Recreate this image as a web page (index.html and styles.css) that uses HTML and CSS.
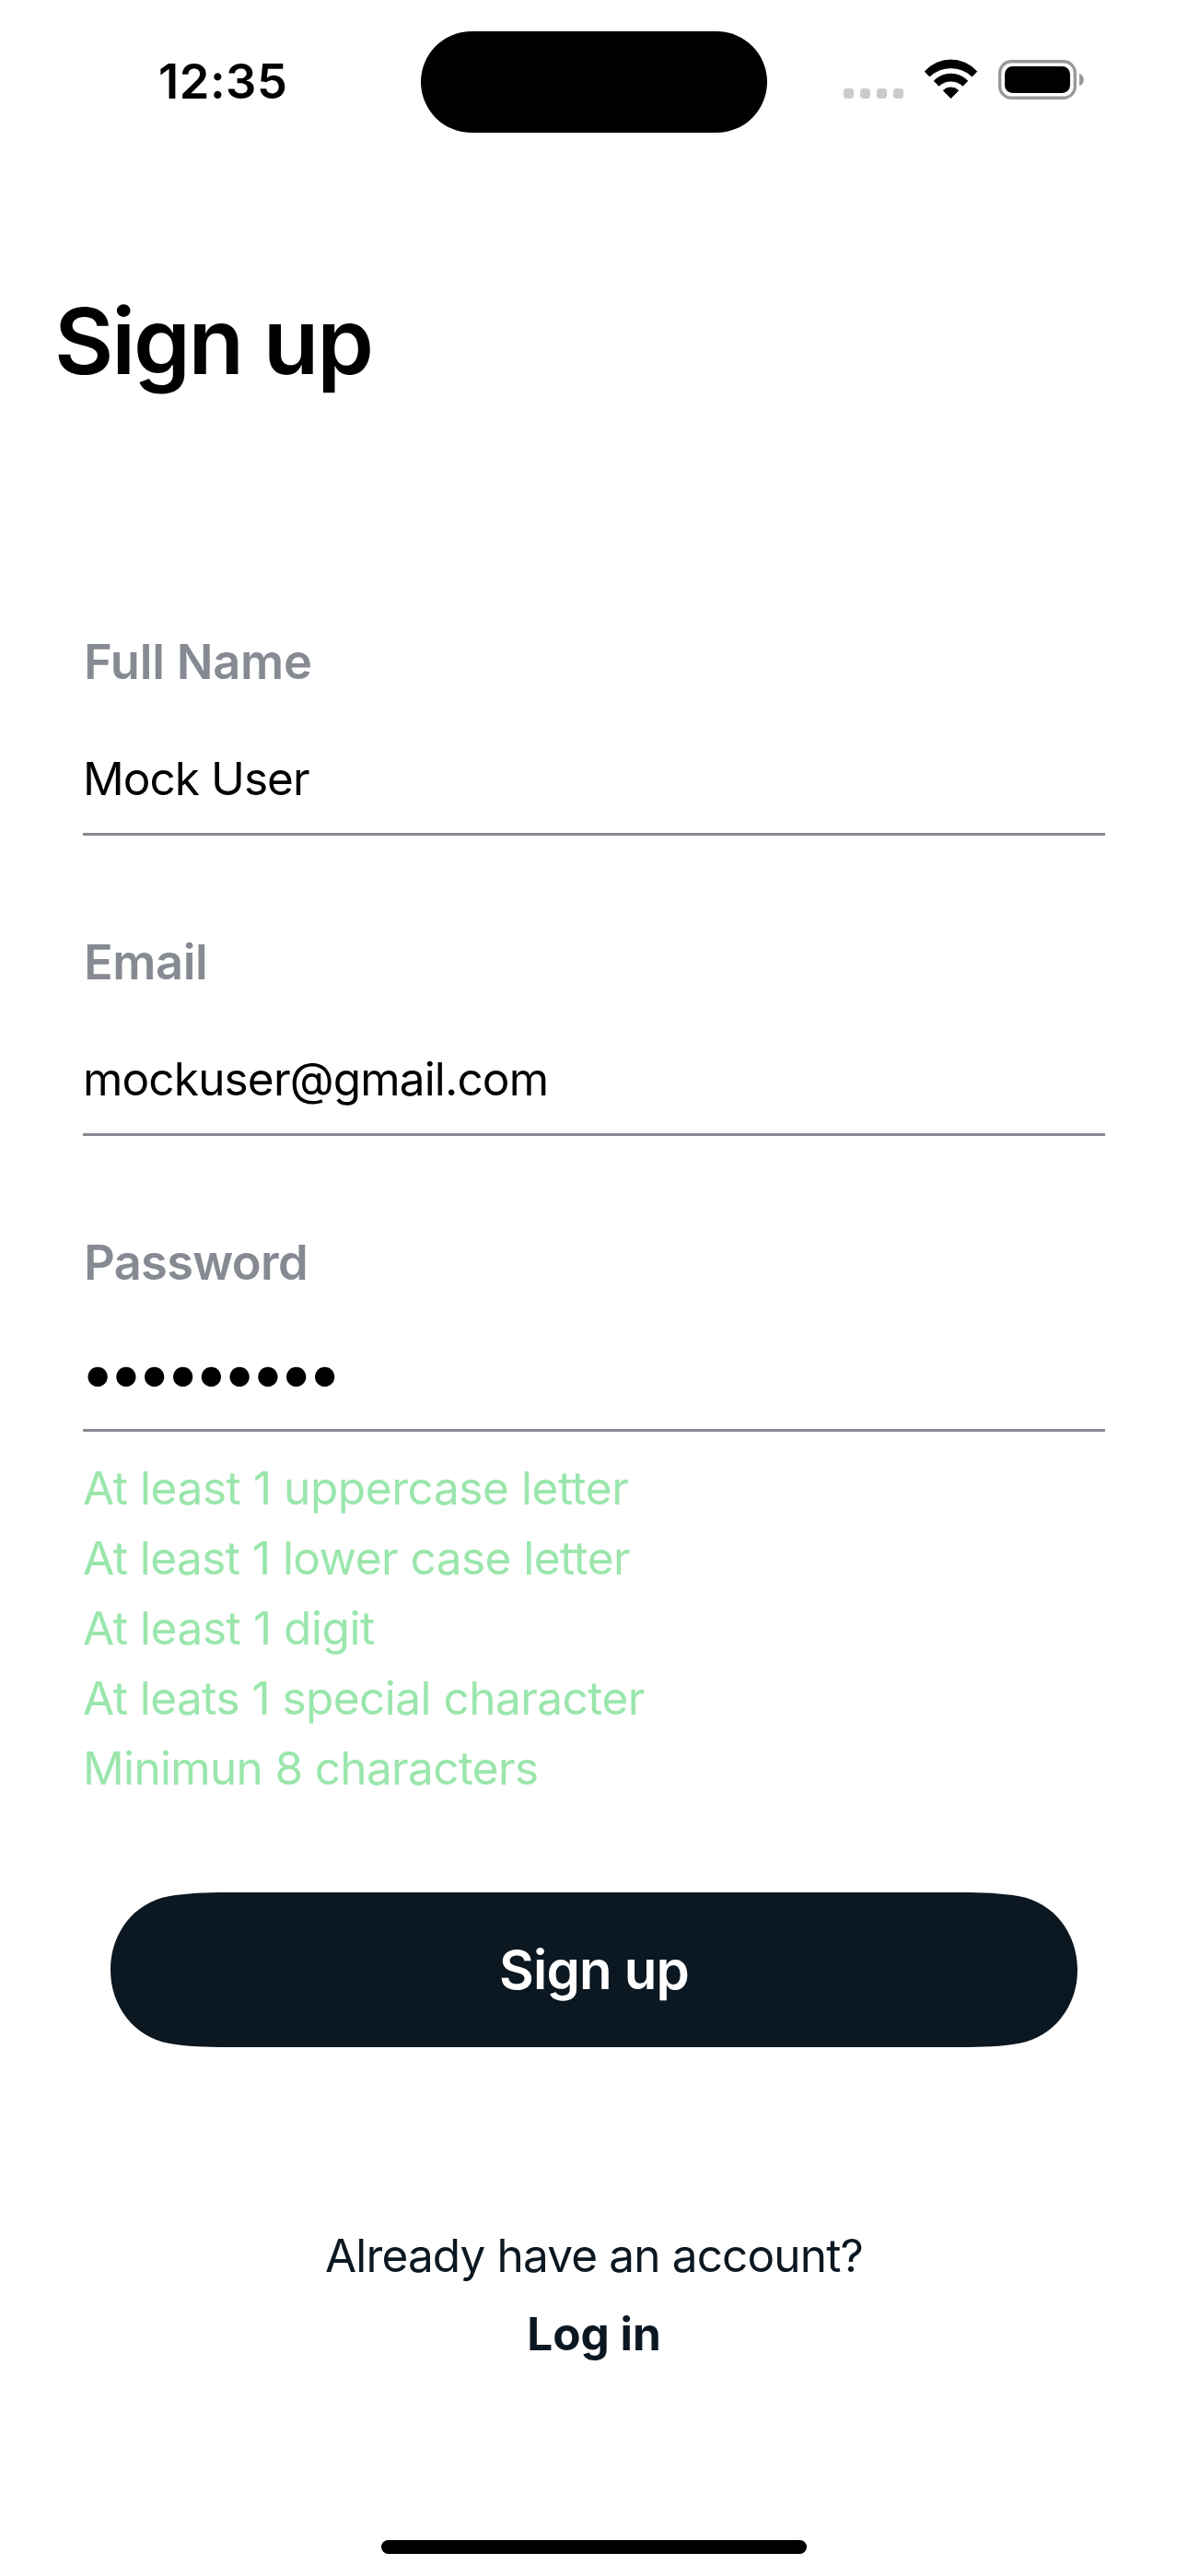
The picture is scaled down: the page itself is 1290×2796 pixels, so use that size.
FILE: index.html
```html
<!DOCTYPE html>
<html lang="en">
<head>
<meta charset="utf-8">
<title>Sign up</title>
<link rel="stylesheet" href="styles.css">
</head>
<body>
<div class="screen">
  <header class="status">
    <div class="status-time">12:35</div>
    <div class="island"></div>
    <svg class="status-icons" width="262" height="46" viewBox="916 64 262 46" aria-hidden="true">
      <g fill="#cbcbcb">
        <rect x="916" y="96" width="11" height="11" rx="3.4"/>
        <rect x="934" y="96" width="11" height="11" rx="3.4"/>
        <rect x="952" y="96" width="11" height="11" rx="3.4"/>
        <rect x="970" y="96" width="11" height="11" rx="3.4"/>
      </g>
      <g stroke="#000" stroke-width="1" stroke-linejoin="round">
        <path d="M1004.3 77.6A38 38 0 0 1 1060.7 77.6L1055.6 82.9A33.5 33.5 0 0 0 1009.4 82.9Z"/>
        <path d="M1014.3 87.8A25.5 25.5 0 0 1 1050.7 87.8L1045.4 93.2A18.5 18.5 0 0 0 1019.6 93.2Z"/>
        <path d="M1024.3 98.2A12 12 0 0 1 1040.7 98.2L1032.5 106.5Z"/>
      </g>
      <rect x="1085.7" y="66.7" width="81.6" height="39.6" rx="12.5" fill="none" stroke="#999" stroke-width="3.4"/>
      <rect x="1091" y="72" width="71" height="29" rx="8.5"/>
      <path d="M1172 79.7C1178.4 82 1178.4 91 1172 93.3Z" fill="#999"/>
    </svg>
  </header>

  <h1 class="title">Sign up</h1>

  <form class="form">
    <div class="field">
      <label class="label">Full Name</label>
      <div class="value value-name">Mock User</div>
    </div>
    <div class="field">
      <label class="label label-email">Email</label>
      <div class="value">mockuser@gmail.com</div>
    </div>
    <div class="field">
      <label class="label label-password">Password</label>
      <div class="value value-password">•••••••••</div>
    </div>
    <ul class="rules">
      <li>At least 1 uppercase letter</li>
      <li>At least 1 lower case letter</li>
      <li>At least 1 digit</li>
      <li>At leats 1 special character</li>
      <li>Minimun 8 characters</li>
    </ul>
    <button class="submit" type="button">Sign up</button>
  </form>

  <footer class="footer">
    <p class="question">Already have an account?</p>
    <a class="login">Log in</a>
  </footer>

  <div class="home-indicator"></div>
</div>
</body>
</html>
```
FILE: styles.css
```css
* { box-sizing: border-box; }

body {
  margin: 0;
  background: #fff;
  color: #000;
  font-family: Inter, "Liberation Sans", sans-serif;
}

.screen {
  display: flex;
  flex-direction: column;
  width: 1290px;
  height: 2796px;
  overflow: hidden;
}

/* Status bar */
.status {
  display: grid;
  grid-template-columns: 1fr 376px 1fr;
  align-items: center;
  height: 177px;
}

.status-time {
  padding: 0 0 2px 172px;
  font-size: 52.4px;
  font-weight: 600;
  line-height: 64px;
  letter-spacing: 0.54px;
}

.island {
  height: 110px;
  border-radius: 55px;
  background: #000;
}

.status-icons {
  justify-self: end;
  margin-right: 112px;
  margin-top: -3px;
}

.title {
  margin: 133px 0 0 59px;
  font-size: 99px;
  font-weight: 600;
  line-height: 120px;
  letter-spacing: -2.2px;
}

/* Form */
.form {
  display: flex;
  flex-direction: column;
  margin-top: 256px;
  padding: 0 90px;
}

.field {
  margin-bottom: 105px;
  border-bottom: 3px solid #868a92;
}

.label {
  display: block;
  margin-bottom: 65px;
  padding-left: 1px;
  color: #868a92;
  font-size: 52.4px;
  font-weight: 600;
  line-height: 64px;
  letter-spacing: -0.22px;
}

.label-email { letter-spacing: -0.4px; }
.label-password { letter-spacing: -0.67px; }

.value {
  height: 89px;
  font-size: 49.5px;
  line-height: 60px;
  letter-spacing: -0.835px;
}

.value-name { letter-spacing: -0.95px; }

.value-password {
  height: 84px;
  margin-left: -3px;
  font-size: 68px;
  line-height: 45px;
  letter-spacing: -7.45px;
}

.field:nth-of-type(3) { margin-bottom: 23px; }

.rules {
  margin: 0;
  padding: 0;
  list-style: none;
  color: #9ae6ac;
  font-size: 49.5px;
  line-height: 76px;
  letter-spacing: -0.53px;
}

.rules li:nth-child(1),
.rules li:nth-child(3) { letter-spacing: -0.42px; }
.rules li:nth-child(5) { letter-spacing: -0.66px; }

.submit {
  height: 168px;
  margin: 97px 30px 0;
  padding: 0;
  border: 0;
  background: #0b1721;
  color: #fff;
  font-family: inherit;
  font-size: 58.2px;
  font-weight: 600;
  letter-spacing: -0.83px;
  /* pill with continuous-curvature corners */
  clip-path: path("M0 84C0 44 26 11 63 4.3C82 .8 105 0 125 0H925C945 0 968 .8 987 4.3C1024 11 1050 44 1050 84C1050 124 1024 157 987 163.7C968 167.2 945 168 925 168H125C105 168 82 167.2 63 163.7C26 157 0 124 0 84Z");
}

/* Footer */
.footer {
  display: flex;
  flex-direction: column;
  align-items: center;
  margin-top: 184px;
  color: #0b1721;
  font-size: 49.5px;
  line-height: 85px;
}

.question {
  margin: 0;
  letter-spacing: -0.85px;
}

.login { font-weight: 700; }

.home-indicator {
  align-self: center;
  width: 462px;
  height: 15px;
  margin-top: auto;
  margin-bottom: 24px;
  border-radius: 8px;
  background: #000;
}
```
